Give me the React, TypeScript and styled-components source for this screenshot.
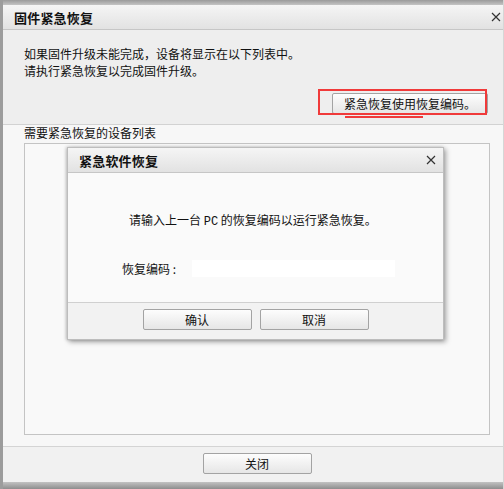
import React from "react";
import styled, { createGlobalStyle } from "styled-components";

const Global = createGlobalStyle`
  html, body { margin: 0; padding: 0; background: #ffffff; }
  body { font-family: "Noto Sans CJK SC", "Noto Sans", sans-serif; font-size: 12px; color: #111; }
  * { box-sizing: border-box; }
`;

const Window = styled.div`
  position: relative;
  width: 504px;
  height: 489px;
  display: flex;
  flex-direction: column;
  background: #efefef;
  border-left: 3px solid #9c9c9c;
  border-right: 1px solid #d6d6d6;
  overflow: hidden;
`;

const TopStrip = styled.div`
  height: 5px;
  background: linear-gradient(#9a9a9a, #c4c4c4);
`;

const TitleBar = styled.div<{ $h: number; $pr: number }>`
  height: ${(p) => p.$h}px;
  display: flex;
  align-items: center;
  justify-content: space-between;
  padding: 0 ${(p) => p.$pr}px 0 11px;
  background: linear-gradient(#f5f5f5, #e2e2e2);
  border-bottom: 1px solid #c6c6c6;
  flex-shrink: 0;
`;

const Title = styled.span`
  font-weight: 700;
  font-size: 13px;
  color: #111;
  letter-spacing: 0.2px;
`;

const CloseX = styled.svg`
  width: 10px;
  height: 10px;
  display: block;
`;

const InfoSection = styled.div`
  height: 95px;
  padding: 15px 15px 0 21px;
  display: flex;
  flex-direction: column;
  border-bottom: 1px solid #d2d2d2;
  background: #eeeeee;
  flex-shrink: 0;
`;

const InfoText = styled.div`
  line-height: 17px;
  font-size: 12px;
`;

const ButtonRow = styled.div`
  display: flex;
  justify-content: flex-end;
  margin-top: 14px;
`;

const Btn = styled.button<{ $w: number }>`
  position: relative;
  width: ${(p) => p.$w}px;
  height: 21px;
  padding: 0;
  font-family: inherit;
  font-size: 12px;
  color: #111;
  border: 1px solid #a3a3a3;
  border-radius: 2px;
  background: linear-gradient(#fdfdfd, #e6e6e6);
  display: flex;
  align-items: center;
  justify-content: center;
`;

const RedBox = styled.div`
  position: absolute;
  left: -15px;
  top: -5px;
  width: 169px;
  height: 26px;
  border: 2px solid #f03a3a;
  pointer-events: none;
`;

const RedLine = styled.div`
  position: absolute;
  left: 12px;
  top: 22px;
  width: 78px;
  height: 2px;
  background: #f03a3a;
`;

const ListSection = styled.div`
  flex: 1;
  display: flex;
  flex-direction: column;
  padding: 1px 13px 11px 21px;
  background: #f7f7f7;
  border-bottom: 1px solid #d4d4d4;
`;

const ListLabel = styled.div`
  font-size: 12px;
  line-height: 14px;
  margin-bottom: 3px;
`;

const ListBox = styled.div`
  flex: 1;
  background: #f9f9f9;
  border: 1px solid #c4c4c4;
`;

const Footer = styled.div`
  height: 35px;
  display: flex;
  justify-content: center;
  padding: 6px 0 0 8px;
  background: #f1f1f1;
  flex-shrink: 0;
`;

const BottomStrip = styled.div`
  height: 7px;
  background: linear-gradient(#c2c2c2, #8e8e8e);
  flex-shrink: 0;
`;

const Dialog = styled.div`
  position: absolute;
  left: 64px;
  top: 147px;
  width: 377px;
  height: 193px;
  display: flex;
  flex-direction: column;
  background: #fafafa;
  border: 1px solid #bdbdbd;
  box-shadow: 2px 2px 5px rgba(0, 0, 0, 0.35), -1px 0 3px rgba(0, 0, 0, 0.2);
`;

const DialogBody = styled.div`
  flex: 1;
  display: flex;
  flex-direction: column;
  padding: 38px 0 0 61px;
  background: #fafafa;
`;

const Prompt = styled.div`
  line-height: 18px;
  font-size: 12px;
`;

const Mono = styled.span`
  font-family: "Liberation Mono", monospace;
  font-size: 12px;
`;

const FieldRow = styled.div`
  display: flex;
  align-items: center;
  margin-top: 29px;
  margin-left: -7px;
`;

const FieldLabel = styled.span`
  width: 70px;
  font-size: 12px;
  white-space: pre;
`;

const Input = styled.div`
  width: 203px;
  height: 17px;
  background: #ffffff;
`;

const DialogFooter = styled.div`
  height: 37px;
  display: flex;
  justify-content: center;
  gap: 8px;
  padding-top: 6px;
  background: #f2f2f2;
  border-top: 1px solid #d0d0d0;
`;

const X = () => (
  <CloseX viewBox="0 0 10 10">
    <path d="M1 1 L9 9 M9 1 L1 9" stroke="#333" strokeWidth="1.2" fill="none" />
  </CloseX>
);

export default function App() {
  return (
    <>
      <Global />
      <Window>
        <TopStrip />
        <TitleBar $h={25} $pr={2}>
          <Title>固件紧急恢复</Title>
          <X />
        </TitleBar>
        <InfoSection>
          <InfoText>如果固件升级未能完成，设备将显示在以下列表中。</InfoText>
          <InfoText>请执行紧急恢复以完成固件升级。</InfoText>
          <ButtonRow>
            <Btn $w={156}>
              紧急恢复使用恢复编码。
              <RedBox />
              <RedLine />
            </Btn>
          </ButtonRow>
        </InfoSection>
        <ListSection>
          <ListLabel>需要紧急恢复的设备列表</ListLabel>
          <ListBox />
        </ListSection>
        <Footer>
          <Btn $w={109}>关闭</Btn>
        </Footer>
        <BottomStrip />
        <Dialog>
          <TitleBar $h={25} $pr={7}>
            <Title>紧急软件恢复</Title>
            <X />
          </TitleBar>
          <DialogBody>
            <Prompt>
              请输入上一台 <Mono>PC</Mono> 的恢复编码以运行紧急恢复。
            </Prompt>
            <FieldRow>
              <FieldLabel>{"恢复编码 :"}</FieldLabel>
              <Input />
            </FieldRow>
          </DialogBody>
          <DialogFooter>
            <Btn $w={109}>确认</Btn>
            <Btn $w={109}>取消</Btn>
          </DialogFooter>
        </Dialog>
      </Window>
    </>
  );
}
